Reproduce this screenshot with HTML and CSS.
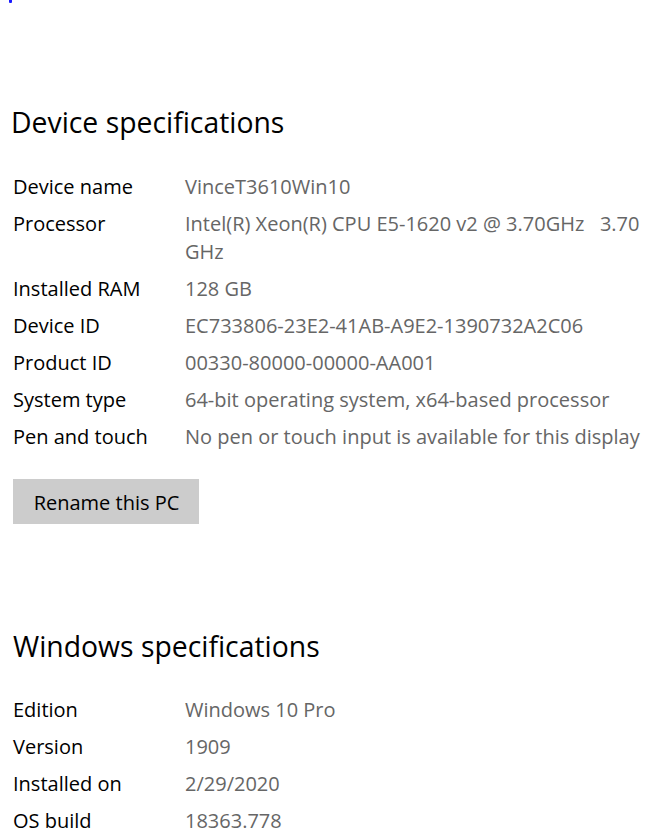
FILE: index.html
```html
<!DOCTYPE html>
<html lang="en">
<head>
<meta charset="utf-8">
<title>About</title>
<link rel="stylesheet" href="styles.css">
</head>
<body>
<div class="focus-dot"></div>
<main class="page">
  <section class="section">
    <h2 class="heading heading-device">Device specifications</h2>
    <dl class="specs">
      <dt>Device name</dt><dd>VinceT3610Win10</dd>
      <dt>Processor</dt><dd class="pre">Intel(R) Xeon(R) CPU E5-1620 v2 @ 3.70GHz   3.70 GHz</dd>
      <dt>Installed RAM</dt><dd>128 GB</dd>
      <dt>Device ID</dt><dd>EC733806-23E2-41AB-A9E2-1390732A2C06</dd>
      <dt>Product ID</dt><dd>00330-80000-00000-AA001</dd>
      <dt>System type</dt><dd>64-bit operating system, x64-based processor</dd>
      <dt>Pen and touch</dt><dd>No pen or touch input is available for this display</dd>
    </dl>
    <button class="btn" type="button">Rename this PC</button>
  </section>
  <section class="section section-windows">
    <h2 class="heading">Windows specifications</h2>
    <dl class="specs">
      <dt>Edition</dt><dd>Windows 10 Pro</dd>
      <dt>Version</dt><dd>1909</dd>
      <dt>Installed on</dt><dd>2/29/2020</dd>
      <dt>OS build</dt><dd>18363.778</dd>
    </dl>
  </section>
</main>
</body>
</html>
```
FILE: styles.css
```css
html, body {
  margin: 0;
  padding: 0;
  background: #ffffff;
}

body {
  font-family: "Open Sans", "Noto Sans", "DejaVu Sans", sans-serif;
  color: #000000;
  width: 672px;
  height: 838px;
  overflow: hidden;
}

.focus-dot {
  width: 3px;
  height: 3px;
  margin-left: 9px;
  background: #1a1aff;
  border-radius: 0 0 1px 1px;
}

.page {
  padding: 0 10px 0 13px;
}

.section {
  display: flex;
  flex-direction: column;
  align-items: flex-start;
}

.heading {
  margin: 99px 0 0 0;
  font-size: 28.35px;
  font-weight: 400;
  line-height: 40px;
}

.heading-device {
  margin-left: -2px;
}

.section-windows .heading {
  margin-top: 101.5px;
}

.specs {
  margin: 30.5px 0 0 0;
  display: grid;
  grid-template-columns: 172px 1fr;
  row-gap: 9px;
  width: 100%;
  font-size: 20px;
  line-height: 28px;
}

.specs dt {
  margin: 0;
  color: #000000;
}

.specs dd {
  margin: 0;
  color: #666666;
}

.specs dd.pre {
  white-space: pre-wrap;
}

.btn {
  margin-top: 28.5px;
  width: 186px;
  height: 45px;
  padding: 2px 0 0 1px;
  border: none;
  border-radius: 0;
  background: #cccccc;
  color: #000000;
  font-family: inherit;
  font-size: 20px;
  line-height: 43px;
  text-align: center;
  box-sizing: border-box;
}
```
